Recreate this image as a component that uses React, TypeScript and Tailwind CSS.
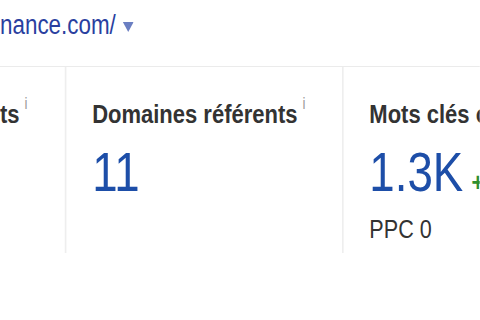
import React from 'react';

// The source is a horizontally condensed screen, so the whole page is laid out wide
// and squeezed with scale-x.
const font = { fontFamily: '"Liberation Sans", Arial, sans-serif' };

function Info() {
    return <span className="self-start ml-[6px] -mt-[5px] text-[16px] leading-none text-[#999999]">i</span>;
}

function Title({ children }: { children: React.ReactNode }) {
    return (
        <div className="flex items-start whitespace-nowrap">
            <span className="text-[26.5px] leading-none font-bold text-[#333333]">{children}</span>
            <Info />
        </div>
    );
}

export default function App() {
    return (
        <div className="w-[480px] h-[320px] overflow-hidden bg-white" style={font}>
            <div className="w-[578px] h-[320px] origin-top-left scale-x-[0.83]">
                <div className="h-[67px] border-b border-[#ebebeb] pt-[12px] flex items-start">
                    <span className="text-[27px] leading-none text-[#2a3f9f] whitespace-nowrap">nance.com/</span>
                    <svg width="13" height="10" viewBox="0 0 13 10" className="ml-[8px] mt-[10px]">
                        <polygon points="0,0 13,0 6.5,10" fill="#6b7fc2" />
                    </svg>
                </div>
                <div className="flex">
                    <div className="w-[80px] shrink-0 overflow-hidden border-r-2 border-[#eeeeee] pt-[34px] h-[186px]">
                        <div className="flex justify-end pr-[45px]">
                            <Title>Liens entrants</Title>
                        </div>
                    </div>
                    <div className="w-[334px] shrink-0 border-r-2 border-[#eeeeee] pt-[34px] pl-[31px]">
                        <Title>Domaines référents</Title>
                        <div className="mt-[17px] text-[55px] leading-none text-[#1d4ea8]">11</div>
                    </div>
                    <div className="flex-1 pt-[34px] pl-[31px] pb-[10px] overflow-hidden">
                        <Title>Mots clés organiques</Title>
                        <div className="mt-[17px] flex items-baseline whitespace-nowrap">
                            <span className="text-[55px] leading-none text-[#1d4ea8]">1.3K</span>
                            <span className="ml-[10px] text-[26px] leading-none font-bold text-[#2f8f2f]">+12</span>
                        </div>
                        <div className="mt-[16px] text-[26px] leading-none text-[#333333]">PPC 0</div>
                    </div>
                </div>
            </div>
        </div>
    );
}
